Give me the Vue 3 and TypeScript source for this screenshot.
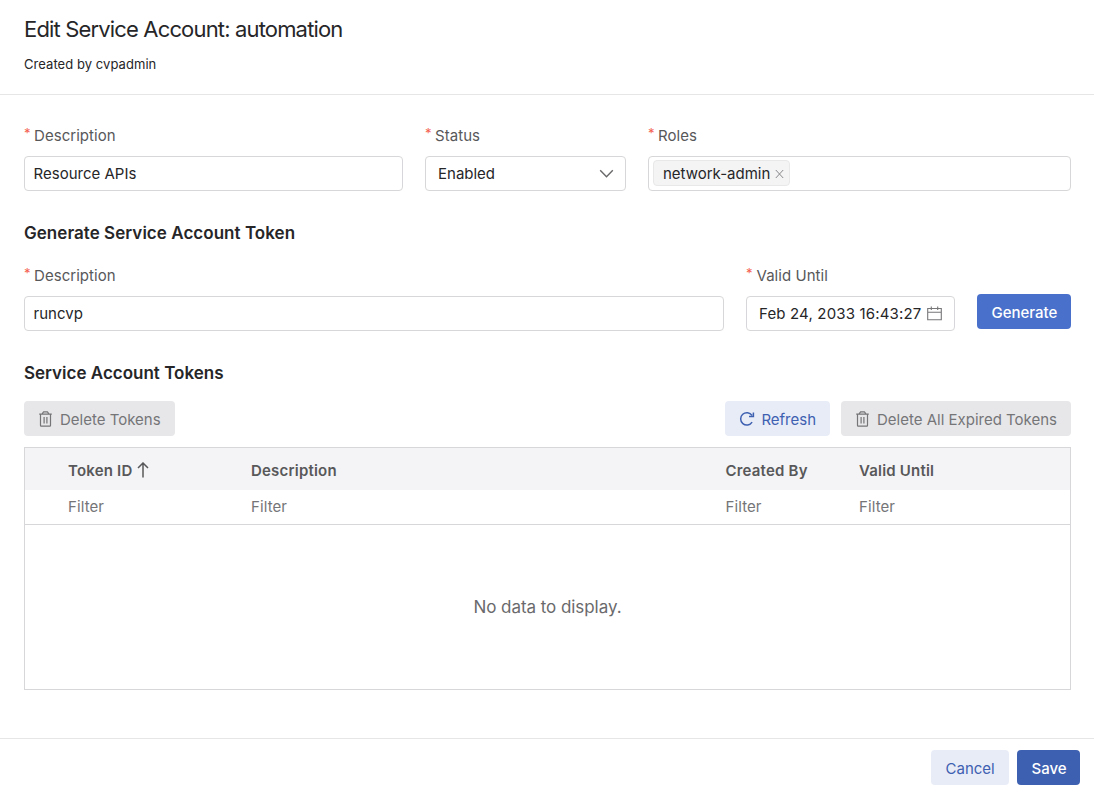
<script setup lang="ts">
import { ref } from 'vue'

interface Column {
  key: string
  title: string
  sorted?: boolean
}

const description = ref<string>('Resource APIs')
const tokenDescription = ref<string>('runcvp')
const validUntil = ref<string>('Feb 24, 2033 16:43:27')
const roles = ref<string[]>(['network-admin'])

const columns: Column[] = [
  { key: 'id', title: 'Token ID', sorted: true },
  { key: 'desc', title: 'Description' },
  { key: 'by', title: 'Created By' },
  { key: 'until', title: 'Valid Until' },
]

function removeRole(role: string): void {
  roles.value = roles.value.filter((r) => r !== role)
}
</script>

<template>
  <div class="page">
    <header class="header">
      <h1 class="title">Edit Service Account: automation</h1>
      <p class="subtitle">Created by cvpadmin</p>
    </header>

    <main class="content">
      <div class="row account-row">
        <div class="field">
          <label class="label"><span class="req">*</span><span>Description</span></label>
          <div class="control"><input v-model="description" class="input" /></div>
        </div>
        <div class="field">
          <label class="label"><span class="req">*</span><span>Status</span></label>
          <div class="control select">
            <span>Enabled</span>
            <svg class="chevron" width="15" height="15" viewBox="0 0 15 15"><path d="M1.2 4.2 7.5 10.8 13.8 4.2" /></svg>
          </div>
        </div>
        <div class="field">
          <label class="label"><span class="req">*</span><span>Roles</span></label>
          <div class="control tags">
            <span v-for="role in roles" :key="role" class="tag">
              <span>{{ role }}</span>
              <svg class="tag-close" width="9" height="10" viewBox="0 0 9 10" @click="removeRole(role)"><path d="M.8 1 8.2 9M8.2 1 .8 9" /></svg>
            </span>
          </div>
        </div>
      </div>

      <h2 class="section h-generate">Generate Service Account Token</h2>

      <div class="row token-row">
        <div class="field">
          <label class="label"><span class="req">*</span><span>Description</span></label>
          <div class="control"><input v-model="tokenDescription" class="input" /></div>
        </div>
        <div class="field">
          <label class="label"><span class="req">*</span><span class="l-valid">Valid Until</span></label>
          <div class="control date">
            <span class="date-text">{{ validUntil }}</span>
            <svg class="calendar" width="15" height="15" viewBox="0 0 15 15"><path d="M.7 2.5h13.6v11.3H.7zM.7 6.2h13.6M4.3.4v3.6M10.7.4v3.6" /></svg>
          </div>
        </div>
        <button class="btn primary generate"><span>Generate</span></button>
      </div>

      <h2 class="section h-tokens">Service Account Tokens</h2>

      <div class="toolbar">
        <button class="btn disabled delete">
          <svg class="trash" width="13" height="16" viewBox="0 0 13 16"><path d="M.2 3.2h12.6M1.5 3.4v11.2q0 .6.6.6h8.8q.6 0 .6-.6V3.4M3.4 3.2V2.4L4.6.9h3.8l1.2 1.5v.8M5.1 6v6.5M7.9 6v6.5" /></svg>
          <span>Delete Tokens</span>
        </button>
        <div class="toolbar-right">
          <button class="btn light refresh">
            <svg class="reload" width="16" height="16" viewBox="0 0 16 16"><path d="M13.1 11.2A6.2 6.2 0 1 1 13 4.4M14.4 1.4v4.1h-4.4" /></svg>
            <span>Refresh</span>
          </button>
          <button class="btn disabled expired">
            <svg class="trash" width="13" height="16" viewBox="0 0 13 16"><path d="M.2 3.2h12.6M1.5 3.4v11.2q0 .6.6.6h8.8q.6 0 .6-.6V3.4M3.4 3.2V2.4L4.6.9h3.8l1.2 1.5v.8M5.1 6v6.5M7.9 6v6.5" /></svg>
            <span>Delete All Expired Tokens</span>
          </button>
        </div>
      </div>

      <div class="table">
        <div class="grid head">
          <div v-for="c in columns" :key="c.key" class="cell">
            <span>{{ c.title }}</span>
            <svg v-if="c.sorted" class="sort" width="12" height="16" viewBox="0 0 12 16"><path d="M6 15.5V1.2M1 6 6 1l5 5" /></svg>
          </div>
        </div>
        <div class="grid filters">
          <div v-for="c in columns" :key="c.key" class="cell">Filter</div>
        </div>
        <div class="empty"><span>No data to display.</span></div>
      </div>
    </main>

    <footer class="footer">
      <button class="btn light cancel"><span>Cancel</span></button>
      <button class="btn save"><span>Save</span></button>
    </footer>
  </div>
</template>

<style>
body {
  background: #fff;
}
</style>

<style scoped>
.page,
.page * {
  box-sizing: border-box;
}
.page {
  width: 100%;
  height: 792px;
  display: flex;
  flex-direction: column;
  overflow: hidden;
  font-family: Inter, "Liberation Sans", sans-serif;
  font-size: 15px;
  color: #262628;
  white-space: nowrap;
}
.header {
  height: 95px;
  padding: 14px 24px 0;
  border-bottom: 1px solid #e6e6e7;
}
.title {
  margin: 0;
  font-size: 22px;
  line-height: 30px;
  font-weight: 400;
  letter-spacing: -0.84px;
}
.subtitle {
  margin: 10px 0 0;
  font-size: 13px;
  line-height: 20px;
  letter-spacing: 0.06px;
}
.content {
  flex: 1;
  padding: 30px 23px 0 24px;
}
.row {
  display: grid;
  column-gap: 22px;
}
.account-row {
  grid-template-columns: 379px 201px 1fr;
}
.token-row {
  grid-template-columns: 1fr 209px 94px;
}
.label {
  display: flex;
  height: 22px;
  line-height: 22px;
  margin-bottom: 9px;
  color: #58585a;
  letter-spacing: 0.05px;
}
.l-valid {
  padding-left: 0.5px;
}
.req {
  width: 10px;
  font-size: 13px;
  line-height: 16px;
  color: #f4604f;
}
.control {
  display: flex;
  align-items: center;
  height: 35px;
  border: 1px solid #d7d7d9;
  border-radius: 4px;
  background: #fff;
}
.input {
  width: 100%;
  border: 0;
  outline: 0;
  padding: 0 8.6px;
  background: transparent;
  font: inherit;
  color: inherit;
}
.select {
  padding: 0 11px 0 12px;
  justify-content: space-between;
}
svg {
  display: block;
  flex: none;
  fill: none;
  stroke: currentColor;
  stroke-width: 1.2;
}
.chevron {
  color: #69696b;
  stroke-width: 1.4;
}
.tags {
  padding-left: 4px;
}
.tag {
  display: flex;
  align-items: center;
  justify-content: space-between;
  width: 137px;
  height: 26px;
  margin-bottom: 1px;
  padding: 1px 5px 0 9px;
  border: 1px solid #e8e8e9;
  border-radius: 4px;
  background: #f4f4f5;
}
.tag-close {
  color: #88888a;
  stroke-width: 1;
}
.date {
  padding: 0 12px;
  justify-content: space-between;
}
.date-text {
  letter-spacing: 0.16px;
}
.calendar {
  color: #77777a;
  stroke-width: 1.1;
}
.section {
  height: 24px;
  font-size: 17px;
  line-height: 24px;
  font-weight: 600;
}
.section.h-generate {
  margin: 30px 0 20px;
  letter-spacing: 0.04px;
}
.section.h-tokens {
  margin: 30px 0 16px;
}
.btn {
  display: flex;
  align-items: center;
  height: 35px;
  padding: 2px 14px 0;
  border: 0;
  border-radius: 4px;
  font: inherit;
  white-space: nowrap;
}
.primary {
  background: #4971cb;
  color: #fff;
  font-weight: 500;
}
.generate {
  width: 94px;
  margin-top: 29px;
}
.light {
  background: #e8ecf7;
  color: #3e60b1;
}
.disabled {
  background: #e7e7e9;
  color: #757578;
}
.save {
  width: 63px;
  background: #3e60b1;
  color: #fff;
  font-weight: 500;
}
.cancel {
  width: 78px;
}
.generate,
.cancel,
.save {
  padding-left: 14.5px;
}
.toolbar {
  display: flex;
  justify-content: space-between;
  margin-bottom: 11px;
}
.toolbar-right {
  display: flex;
  gap: 11px;
}
.delete {
  width: 151px;
}
.expired {
  width: 230px;
}
.refresh {
  width: 105px;
}
.trash {
  margin: -2px 8px 0 1px;
}
.reload {
  margin: -2px 6.4px 0 0;
  stroke-width: 1.5;
}
.table {
  display: flex;
  flex-direction: column;
  height: 243px;
  border: 1px solid #d7d7d9;
}
.grid {
  display: grid;
  grid-template-columns: 183px 474.5px 133.5px 1fr;
  padding-left: 43px;
}
.cell {
  display: flex;
  align-items: center;
}
.head {
  height: 42px;
  padding-top: 3px;
  background: #f4f4f6;
  font-weight: 600;
  color: #58585a;
  letter-spacing: 0.2px;
}
.sort {
  margin: -2px 0 0 4.5px;
  stroke-width: 1.5;
}
.filters {
  height: 35px;
  padding-bottom: 2px;
  border-bottom: 1px solid #d7d7d9;
  color: #757578;
  letter-spacing: 0.1px;
}
.empty {
  flex: 1;
  display: flex;
  align-items: center;
  justify-content: center;
  font-size: 17px;
  color: #6a6a6c;
  letter-spacing: -0.06px;
}
.footer {
  display: flex;
  gap: 8px;
  justify-content: flex-end;
  height: 54px;
  padding: 11px 14px 0 0;
  border-top: 1px solid #e6e6e7;
}
</style>
